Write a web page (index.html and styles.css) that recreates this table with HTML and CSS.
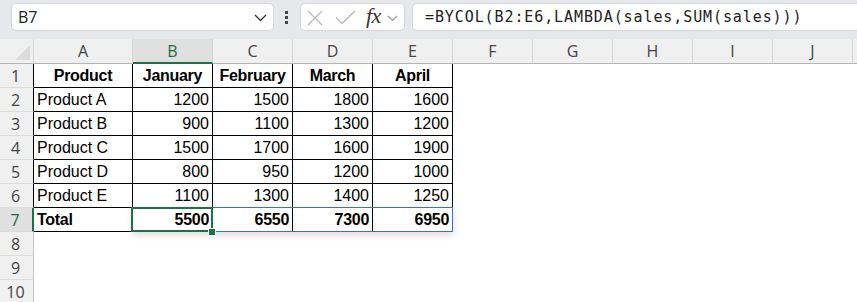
FILE: index.html
```html
<!DOCTYPE html>
<html>
<head>
<meta charset="utf-8">
<link rel="stylesheet" href="styles.css">
</head>
<body>
<div class="app">
  <div class="toolbar">
    <div class="namebox">
      <span class="nb-text">B7</span>
      <svg class="nb-chev" width="13" height="8" viewBox="0 0 13 8"><polyline points="1,1 6.5,6.5 12,1" fill="none" stroke="#333" stroke-width="1.3"/></svg>
    </div>
    <div class="dots"><i></i><i></i><i></i></div>
    <div class="fxbox">
      <svg class="ic-x" width="16" height="16" viewBox="0 0 16 16"><path d="M1 1 L15 15 M15 1 L1 15" stroke="#b9b9b9" stroke-width="1.3" fill="none"/></svg>
      <svg class="ic-check" width="21" height="15" viewBox="0 0 21 15"><polyline points="1,7.5 7,13.5 20,1" fill="none" stroke="#b9b9b9" stroke-width="1.3"/></svg>
      <span class="fx">fx</span>
      <svg class="ic-chev" width="11" height="7" viewBox="0 0 11 7"><polyline points="1,1 5.5,5.5 10,1" fill="none" stroke="#9a9a9a" stroke-width="1.2"/></svg>
    </div>
    <div class="formula">=BYCOL(B2:E6,LAMBDA(sales,SUM(sales)))</div>
  </div>

  <div class="sheet">
    <div class="grid">
      <!-- header row -->
      <div class="corner"><span class="tri"></span></div>
      <div class="ch">A</div><div class="ch sel">B</div><div class="ch">C</div><div class="ch">D</div><div class="ch">E</div>
      <div class="ch">F</div><div class="ch">G</div><div class="ch">H</div><div class="ch">I</div><div class="ch">J</div><div class="ch last"></div>

      <!-- row 1 -->
      <div class="rh tb">1</div>
      <div class="c t b ctr">Product</div><div class="c t b ctr">January</div><div class="c t b ctr">February</div><div class="c t b ctr">March</div><div class="c t b ctr">April</div>
      <div class="c"></div><div class="c"></div><div class="c"></div><div class="c"></div><div class="c"></div><div class="c"></div>

      <!-- row 2 -->
      <div class="rh tb">2</div>
      <div class="c t">Product A</div><div class="c t r">1200</div><div class="c t r">1500</div><div class="c t r">1800</div><div class="c t r">1600</div>
      <div class="c"></div><div class="c"></div><div class="c"></div><div class="c"></div><div class="c"></div><div class="c"></div>

      <!-- row 3 -->
      <div class="rh tb">3</div>
      <div class="c t">Product B</div><div class="c t r">900</div><div class="c t r">1100</div><div class="c t r">1300</div><div class="c t r">1200</div>
      <div class="c"></div><div class="c"></div><div class="c"></div><div class="c"></div><div class="c"></div><div class="c"></div>

      <!-- row 4 -->
      <div class="rh tb">4</div>
      <div class="c t">Product C</div><div class="c t r">1500</div><div class="c t r">1700</div><div class="c t r">1600</div><div class="c t r">1900</div>
      <div class="c"></div><div class="c"></div><div class="c"></div><div class="c"></div><div class="c"></div><div class="c"></div>

      <!-- row 5 -->
      <div class="rh tb">5</div>
      <div class="c t">Product D</div><div class="c t r">800</div><div class="c t r">950</div><div class="c t r">1200</div><div class="c t r">1000</div>
      <div class="c"></div><div class="c"></div><div class="c"></div><div class="c"></div><div class="c"></div><div class="c"></div>

      <!-- row 6 -->
      <div class="rh tb">6</div>
      <div class="c t">Product E</div><div class="c t r">1100</div><div class="c t r">1300</div><div class="c t r">1400</div><div class="c t r">1250</div>
      <div class="c"></div><div class="c"></div><div class="c"></div><div class="c"></div><div class="c"></div><div class="c"></div>

      <!-- row 7 -->
      <div class="rh sel">7</div>
      <div class="c t b">Total</div><div class="c t b r">5500</div><div class="c t b r">6550</div><div class="c t b r">7300</div><div class="c t b r">6950</div>
      <div class="c"></div><div class="c"></div><div class="c"></div><div class="c"></div><div class="c"></div><div class="c"></div>

      <!-- row 8 -->
      <div class="rh">8</div>
      <div class="c"></div><div class="c"></div><div class="c"></div><div class="c"></div><div class="c"></div>
      <div class="c"></div><div class="c"></div><div class="c"></div><div class="c"></div><div class="c"></div><div class="c"></div>

      <!-- row 9 -->
      <div class="rh">9</div>
      <div class="c"></div><div class="c"></div><div class="c"></div><div class="c"></div><div class="c"></div>
      <div class="c"></div><div class="c"></div><div class="c"></div><div class="c"></div><div class="c"></div><div class="c"></div>

      <!-- row 10 -->
      <div class="rh">10</div>
      <div class="c"></div><div class="c"></div><div class="c"></div><div class="c"></div><div class="c"></div>
      <div class="c"></div><div class="c"></div><div class="c"></div><div class="c"></div><div class="c"></div><div class="c"></div>
    </div>

    <div class="spill"></div>
    <div class="active"></div>
    <div class="handle"></div>
  </div>
</div>
</body>
</html>
```

FILE: styles.css
```css
* { box-sizing: border-box; }

html, body {
  margin: 0;
  padding: 0;
  background: #ffffff;
  overflow: hidden;
}

.app {
  width: 857px;
  height: 302px;
  overflow: hidden;
}

/* ---------- formula bar ---------- */
.toolbar {
  height: 39px;
  background: #e6e8eb;
  display: flex;
  align-items: flex-start;
  padding: 3px 0 0 11px;
  overflow: hidden;
}

.namebox {
  width: 263px;
  height: 28px;
  background: #fff;
  border: 1px solid #d6d8db;
  border-radius: 5px;
  display: flex;
  align-items: center;
  justify-content: space-between;
  padding: 0 6px 0 6px;
}

.nb-text {
  font-family: "Open Sans", "Noto Sans", sans-serif;
  font-size: 16px;
  color: #222;
  letter-spacing: -0.2px;
}

.nb-chev { margin-top: 1px; }

.dots {
  width: 3px;
  margin: 8px 0 0 11px;
  display: flex;
  flex-direction: column;
  gap: 2px;
}
.dots i {
  display: block;
  width: 3px;
  height: 3px;
  background: #444;
}

.fxbox {
  width: 105px;
  height: 28px;
  margin-left: 12px;
  background: #fff;
  border: 1px solid #d6d8db;
  border-radius: 5px;
  display: flex;
  align-items: center;
  padding-left: 6px;
}

.ic-x { margin-top: 1px; }
.ic-check { margin-left: 12px; margin-top: 1px; }

.fx {
  font-family: "Liberation Serif", "DejaVu Serif", serif;
  font-style: italic;
  font-size: 22px;
  color: #333;
  margin-left: 10px;
  line-height: 1;
  margin-top: -2px;
  letter-spacing: -0.5px;
}

.ic-chev { margin-left: 6px; margin-top: 2px; }

.formula {
  flex: 1;
  height: 28px;
  margin-left: 7px;
  margin-right: -10px;
  background: #fff;
  border: 1px solid #d6d8db;
  border-radius: 5px;
  padding-left: 12px;
  display: flex;
  align-items: center;
  font-family: "DejaVu Sans Mono", "Liberation Mono", monospace;
  font-size: 15px;
  letter-spacing: 0.9px;
  color: #222;
  white-space: nowrap;
}

/* ---------- sheet ---------- */
.sheet {
  position: relative;
}

.grid {
  display: grid;
  grid-template-columns: 34px 99px repeat(9, 80px) 1fr;
  grid-template-rows: 25px repeat(10, 24px);
}

.corner {
  background: #f0f0f0;
  border-right: 1px solid #d4d4d4;
  border-bottom: 1px solid #b4b4b4;
  display: flex;
  align-items: flex-end;
  justify-content: flex-end;
  padding: 0 3px 3px 0;
}
.tri {
  width: 0;
  height: 0;
  border-style: solid;
  border-width: 0 0 15px 15px;
  border-color: transparent transparent #dcdcdc transparent;
}

.ch {
  background: #f0f0f0;
  border-right: 1px solid #d4d4d4;
  border-bottom: 1px solid #b4b4b4;
  font-family: "Open Sans", "Noto Sans", sans-serif;
  font-size: 16px;
  color: #444;
  display: flex;
  align-items: center;
  justify-content: center;
}
.ch.sel {
  background: #e0e0e0;
  color: #1e6c41;
  border-bottom: 2px solid #1e7145;
}
.ch.last { border-right: none; }

.rh {
  background: #f0f0f0;
  border-right: 1px solid #c8c8c8;
  border-bottom: 1px solid #dcdcdc;
  font-family: "Open Sans", "Noto Sans", sans-serif;
  font-size: 16px;
  color: #444;
  display: flex;
  align-items: center;
  justify-content: center;
  padding-right: 2px;
}
.rh.tb { border-right-color: #000; }
.rh.sel {
  background: #e0e0e0;
  color: #1e6c41;
  border-right: 2px solid #1e7145;
}

.c {
  font-family: "Liberation Sans", Arial, sans-serif;
  font-size: 16px;
  color: #000;
  display: flex;
  align-items: center;
  padding: 1px 3px 0 3px;
  white-space: nowrap;
  overflow: hidden;
}
.c.t {
  border-right: 1px solid #000;
  border-bottom: 1px solid #000;
}
.c.b {
  font-weight: bold;
  letter-spacing: -0.3px;
}
.c.r { justify-content: flex-end; }
.c.ctr { justify-content: center; }

/* overlays: spill range, active cell, fill handle */
.spill {
  position: absolute;
  left: 132px;
  top: 168px;
  width: 321px;
  height: 25px;
  border: 1px solid #3f6fc6;
  box-shadow: 0 3px 7px rgba(0, 0, 0, 0.14);
}

.active {
  position: absolute;
  left: 131px;
  top: 168px;
  width: 82px;
  height: 25px;
  border: 2px solid #1e7145;
}

.handle {
  position: absolute;
  left: 208px;
  top: 189px;
  width: 8px;
  height: 8px;
  background: #1e7145;
  border: 1px solid #fff;
}
```
